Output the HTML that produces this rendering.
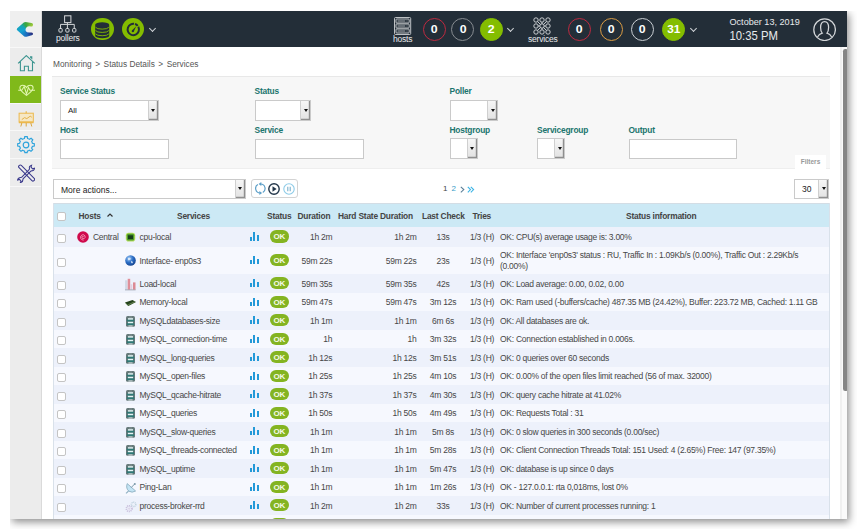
<!DOCTYPE html>
<html><head><meta charset="utf-8">
<style>
*{margin:0;padding:0;box-sizing:border-box}
html,body{width:857px;height:529px;overflow:hidden;background:#fff;font-family:"Liberation Sans",sans-serif;position:relative}
.abs{position:absolute}
#app{position:absolute;left:10px;top:11px;width:837px;height:508px;background:#fff;box-shadow:2px 3px 8px rgba(0,0,0,0.45);clip-path:inset(0 -30px -30px 0)}
#clip{position:absolute;left:0;top:0;width:857px;height:529px;clip-path:inset(11px 10px 10px 10px)}
#tb-l{position:absolute;left:53px;top:203px;width:1px;height:330px;background:#d9e1ea}
#tb-r{position:absolute;left:829px;top:203px;width:1px;height:330px;background:#d9e1ea}
#track{position:absolute;left:840px;top:47px;width:7px;height:480px;background:linear-gradient(90deg,#f0f0f0 0,#f0f0f0 2px,#fafafa 2px)}
#side{position:absolute;left:10px;top:11px;width:32px;height:508px;background:#ececec;border-right:1px solid #dadada}
#logo{position:absolute;left:0;top:0;width:31px;height:36px;background:#efefef}
.nav{position:absolute;left:0;width:31px;height:28px;border-top:1px solid #f8f8f8}
#hdr{position:absolute;left:42px;top:11px;width:805px;height:36px;background:#232e38}
.htxt{position:absolute;color:#e8eaec;font-size:8px;letter-spacing:-0.2px}
.circ{position:absolute;width:23.3px;height:23.3px;border-radius:50%;border:1.9px solid;color:#fff;font-weight:bold;font-size:11px;text-align:center;line-height:21px}
.circ span{display:inline-block;transform:scaleX(1.12)}
.chev{position:absolute;width:5px;height:5px;border-right:1.3px solid #cfd3d6;border-bottom:1.3px solid #cfd3d6;transform:rotate(45deg)}
#crumb{position:absolute;left:53px;top:59px;font-size:8.3px;color:#555;white-space:nowrap}
.gt{margin:0 3.6px 0 3.4px}
#filters{position:absolute;left:52px;top:76px;width:778px;height:92.5px;background:#f7f7f7;border-top:1px solid #e8e8e8;border-bottom:1px solid #eeeeee}
.lbl{position:absolute;font-size:8.4px;letter-spacing:-0.2px;font-weight:bold;color:#1b756e;white-space:nowrap;margin-top:0.6px}
.inp{position:absolute;background:#fff;border:1px solid #c9c9c9;height:21px}
.sel{position:absolute;background:#fff;border:1px solid #cacaca;height:21px}
.sel .btn{position:absolute;right:0;top:0;width:10px;height:100%;background:linear-gradient(#f6f6f6,#e2e2e2);border-left:1px solid #cfcfcf;box-shadow:inset -1.2px -1.2px 0 #8f8f8f}
.sel .btn:after{content:"";position:absolute;left:2.6px;top:50%;margin-top:-2px;border-left:2px solid transparent;border-right:2px solid transparent;border-top:3px solid #111}
.sel .val{position:absolute;left:7px;top:5px;font-size:8px;color:#222}
#ftab{position:absolute;left:795px;top:155px;width:31px;height:14px;background:#fff;font-size:6.5px;font-weight:bold;color:#999;text-align:center;line-height:13px}
.row{position:absolute;left:53px;width:777px;font-size:8.5px;letter-spacing:-0.27px;color:#474747;white-space:nowrap}
.row>div{position:absolute}
.cb{left:4px;top:50%;margin-top:-2.6px;width:9px;height:9px;border:1px solid #c4c4c4;border-radius:2px;background:#fff}
.debian{left:24px;top:50%;margin-top:-6px;width:12px;height:12px}
.debian svg,.sicon svg{display:block}
.hostname{left:40px;top:50%;margin-top:-4.5px;line-height:10px}
.sicon{left:72px;top:50%;margin-top:-5.5px}
.svc{left:86.5px;top:50%;margin-top:-4.5px;line-height:10px}
.graph{left:197px;top:50%;margin-top:-4.2px;width:9px;height:8.3px}
.graph i{position:absolute;width:2.1px;bottom:0;background:#2399d8}
.ok{left:217px;top:50%;margin-top:-6.2px;width:18.7px;height:12.3px;border-radius:6.2px;background:#84b421;color:#f4f9e8;font-weight:bold;font-size:8px;text-align:center;line-height:13.5px}
.dur{right:497.8px;top:50%;margin-top:-4.5px;line-height:10px}
.hard{right:413.5px;top:50%;margin-top:-4.5px;line-height:10px}
.last{left:370px;width:40px;text-align:center;top:50%;margin-top:-4.5px;line-height:10px}
.tries{left:417px;top:50%;margin-top:-4.5px;line-height:10px}
.info{left:447px;top:50%;margin-top:-4.5px;line-height:10px}
.info.two{margin-top:-10px;line-height:10.7px}
#thead{position:absolute;left:53px;top:203px;width:777px;height:23.5px;background:#cce9f5;border-top:1px solid #d3dde5}
#thead>div{position:absolute;top:7.5px;font-size:8.4px;letter-spacing:-0.2px;font-weight:bold;color:#444;white-space:nowrap;line-height:9px}
#scroll{position:absolute;left:843px;top:49px;width:4.5px;height:341.5px;background:#858585;border-radius:2.2px}
</style></head><body>
<div id="app"></div>
<div id="clip">
<div id="side">
  <div id="logo">
    <div class="abs" style="left:4px;top:7px;width:24px;height:22px;background:conic-gradient(from 0deg at 13px 11px, #45a93e 0deg, #a6cc3a 62deg, #5a5a70 92deg, #2a2876 122deg, #1d68bd 180deg, #14a2d2 250deg, #17a5b4 300deg, #33a64c 335deg, #45a93e 360deg);clip-path:path('M11.5 4 L17.6 5.0 Q19.5 5.4 19 7 L18.6 7.9 Q18.1 8.8 16.8 8.5 Q14 7.9 12.6 9.3 Q11 11 11.7 13 Q12.8 14.8 15.6 14.6 L17 14.4 Q18.6 14.3 19 15.4 Q19.2 16.8 17.8 17.2 L12.5 18.7 Q11 19 10 18.2 L3.2 12.2 Q2.2 11.2 3.2 10.3 L9.8 4.5 Q10.5 4 11.5 4 Z')"></div>
  </div>
  <div class="nav" style="top:36px;height:29px">
    <svg class="abs" style="left:7px;top:7px" width="19" height="17" viewBox="0 0 19 17"><path d="M1.1 8.3 L9.3 0.6 L17.8 8.3 M3.4 6.4 V15.7 H7.4 V11.2 H11.4 V15.7 H15.5 V6.4" fill="none" stroke="#3d9590" stroke-width="1.1"/><path d="M13 2.4 V1.2 H15.3 V4.5 Z" fill="#3d9590"/></svg>
  </div>
  <div class="nav" style="top:65px;height:26.5px;background:#80b91a;border-top:none">
    <svg class="abs" style="left:7px;top:8px" width="20" height="13" viewBox="0 0 20 13"><g fill="none" stroke="#e2f6b0" stroke-width="1.05"><path d="M9.5 11.4 C7 9.2 2.9 6.8 2.9 4 C2.9 2.3 4.1 1.2 5.7 1.2 C7.3 1.2 8.8 2.2 9.5 3.4 C10.2 2.2 11.7 1.2 13.3 1.2 C14.9 1.2 16.1 2.3 16.1 4 C16.1 6.8 12 9.2 9.5 11.4 Z"/><path d="M1.2 6.3 H4.8 L7.2 2.5 L9.5 10 L11.4 3.5 L13 6.3 H18"/></g></svg>
  </div>
  <div class="nav" style="top:91.5px">
    <svg class="abs" style="left:7px;top:6px" width="18" height="17" viewBox="0 0 18 17"><rect x="2.1" y="3.2" width="14.2" height="8.6" fill="#f6e7c4" stroke="#ecb84c" stroke-width="1"/><path d="M4.8 9.6 L7.6 7.6 L9.8 8.6 L13.2 6.2 L14.8 7.2" fill="none" stroke="#e2ac3a" stroke-width="0.9"/><path d="M9.2 1.2 V3.2 M1.8 12.6 H16.6" stroke="#ecb84c" stroke-width="1.2"/><path d="M4.8 13 L3.8 16.5 M9.2 13 V16.5 M13.8 13 L14.8 16.5" stroke="#d9a440" stroke-width="1"/></svg>
  </div>
  <div class="nav" style="top:119px">
    <svg class="abs" style="left:7px;top:5px" width="18" height="18" viewBox="0 0 18 18"><path d="M7.6 1 H10.4 L10.8 3.2 L12.6 4 L14.4 2.7 L16.3 4.6 L15 6.4 L15.8 8.2 L17 8.6 V11.4 L14.8 11.8 L14 13.6 L15.3 15.4 L13.4 17.3 L11.6 16 L9.8 16.8" fill="none" stroke="#2ea3dc" stroke-width="0"/><g fill="none" stroke="#2ea3dc" stroke-width="1.2"><circle cx="9" cy="9" r="2.8"/><path d="M7.8 1.2 H10.2 L10.6 3.2 Q11.6 3.5 12.4 4.1 L14.1 3 L15.8 4.7 L14.7 6.4 Q15.2 7.2 15.4 8.2 L17.3 8.6 V11 L15.4 11.4 Q15.1 12.4 14.6 13.2 L15.7 14.9 L14 16.6 L12.3 15.5 Q11.5 16 10.5 16.3 L10.1 18 H7.9 L7.5 16.3 Q6.5 16 5.7 15.5 L4 16.6 L2.3 14.9 L3.4 13.2 Q2.9 12.4 2.6 11.4 L0.7 11 V8.6 L2.6 8.2 Q2.8 7.2 3.3 6.4 L2.2 4.7 L3.9 3 L5.6 4.1 Q6.4 3.5 7.4 3.2 Z" transform="translate(0,-0.6) scale(1,0.96)"/></g></svg>
  </div>
  <div class="nav" style="top:147px">
    <svg class="abs" style="left:7px;top:5px" width="18" height="19" viewBox="0 0 18 19"><g fill="none" stroke="#3b3a8c" stroke-width="1.05"><rect x="-1.6" y="0" width="3.2" height="21" rx="1.4" transform="translate(2.2 1.6) rotate(-45)"/><path d="M4.3 13.6 L12.6 5.2 M5.8 15.1 L14.1 6.8"/><path d="M12.6 5.2 Q11.6 2 14.6 1.2 L14 3.2 L15.6 4.8 L17.6 4.2 Q17.2 7.2 14.1 6.8"/><path d="M4.3 13.6 Q1.4 13.2 0.6 16 L2.6 15.4 L4 17 L3.4 18.6 Q6.2 18.2 5.8 15.1"/></g></svg>
  </div>
  <div class="nav" style="top:175px;height:1px"></div>
</div>
<div id="hdr">
  <!-- pollers -->
  <svg class="abs" style="left:14px;top:3px" width="22" height="20" viewBox="0 0 22 20"><g fill="none" stroke="#d5d8db" stroke-width="1"><rect x="8.6" y="1.8" width="6.3" height="6.8"/><path d="M11.4 8.6 V10.4 M4.55 10.4 H18.25 M4.55 10.4 V14.5 M11.4 10.4 V14.5 M18.25 10.4 V14.5"/><rect x="2.9" y="14.5" width="3.3" height="3.6" rx="1"/><rect x="9.75" y="14.5" width="3.3" height="3.6" rx="1"/><rect x="16.6" y="14.5" width="3.3" height="3.6" rx="1"/></g></svg>
  <div class="htxt" style="left:14px;top:22px;font-size:8.5px">pollers</div>
  <div class="abs" style="left:49px;top:6.5px;width:22.5px;height:22.5px;border-radius:50%;background:#84bd00">
    <svg class="abs" style="left:0;top:0" width="22.5" height="22.5" viewBox="0 0 22.5 22.5"><path d="M4.2 6.7 A7 2.5 0 0 1 18.2 6.7 V17.8 A7 2.5 0 0 1 4.2 17.8 Z" fill="#232e38"/><g fill="none" stroke="#84bd00" stroke-width="0.9"><path d="M4.6 9.3 A6.8 2.4 0 0 0 17.8 9.3"/><path d="M4.6 12.6 A6.8 2.4 0 0 0 17.8 12.6"/><path d="M4.6 15.9 A6.8 2.4 0 0 0 17.8 15.9"/></g></svg>
  </div>
  <div class="abs" style="left:79.5px;top:6.5px;width:22.5px;height:22.5px;border-radius:50%;background:#84bd00">
    <svg class="abs" style="left:0;top:0" width="22.5" height="22.5" viewBox="0 0 22.5 22.5"><circle cx="11.3" cy="11.5" r="5.7" fill="none" stroke="#232e38" stroke-width="2" stroke-dasharray="3.2 0.9 3.2 0.9 40" transform="rotate(-115 11.3 11.5)"/><path d="M9.9 12.6 L14.2 8.2 L11.6 13.9 Z" fill="#232e38"/><circle cx="10.8" cy="13.2" r="1.1" fill="#232e38"/></svg>
  </div>
  <div class="chev" style="left:108px;top:14.5px"></div>

  <!-- hosts -->
  <svg class="abs" style="left:352px;top:5.5px" width="18" height="18" viewBox="0 0 18 18"><g fill="none" stroke="#cfd2d5" stroke-width="0.9"><rect x="0.5" y="0.5" width="16.2" height="17" rx="1"/><rect x="2" y="2" width="13.2" height="4" rx="0.8"/><rect x="2" y="7" width="13.2" height="4" rx="0.8"/><rect x="2" y="12" width="13.2" height="4" rx="0.8"/></g><path d="M3.6 4 H11.2 M3.6 9 H11.2 M3.6 14 H11.2" stroke="#b8bcc0" stroke-width="0.9"/><path d="M13 3.6 V4.4 M13 8.6 V9.4 M13 13.6 V14.4" stroke="#b8bcc0" stroke-width="0.8"/></svg>
  <div class="htxt" style="left:351px;top:22.5px;font-size:8.5px">hosts</div>
  <div class="circ" style="left:380.5px;top:7px;border-color:#bd2a40"><span>0</span></div>
  <div class="circ" style="left:409px;top:7px;border-color:#878c91"><span>0</span></div>
  <div class="circ" style="left:437.5px;top:7px;border-color:#84bd00;background:#84bd00"><span>2</span></div>
  <div class="chev" style="left:466px;top:14.5px"></div>

  <!-- services -->
  <svg class="abs" style="left:491px;top:5.5px" width="18" height="18" viewBox="0 0 18 18"><g fill="none" stroke="#d9dcdf" stroke-width="0.9"><circle cx="3" cy="3" r="2.2"/><circle cx="9" cy="3" r="2.2"/><circle cx="15" cy="3" r="2.2"/><circle cx="3" cy="9" r="2.2"/><circle cx="9" cy="9" r="2.2"/><circle cx="15" cy="9" r="2.2"/><circle cx="3" cy="15" r="2.2"/><circle cx="9" cy="15" r="2.2"/><circle cx="15" cy="15" r="2.2"/><path d="M4.6 4.6 L7.4 7.4 M13.4 4.6 L10.6 7.4 M4.6 13.4 L7.4 10.6 M13.4 13.4 L10.6 10.6 M5.2 9 H6.8 M11.2 9 H12.8 M9 5.2 V6.8 M9 11.2 V12.8"/></g></svg>
  <div class="htxt" style="left:486px;top:22.5px;font-size:8.5px">services</div>
  <div class="circ" style="left:525.5px;top:7px;border-color:#bd2a40"><span>0</span></div>
  <div class="circ" style="left:557.5px;top:7px;border-color:#d99c44"><span>0</span></div>
  <div class="circ" style="left:588.5px;top:7px;border-color:#c9ced3"><span>0</span></div>
  <div class="circ" style="left:619.5px;top:7px;border-color:#84bd00;background:#84bd00;font-size:10.5px;letter-spacing:-0.2px"><span>31</span></div>
  <div class="chev" style="left:649px;top:14.5px"></div>

  <div class="htxt" style="left:687.5px;top:6px;font-size:9.1px;letter-spacing:0px">October 13, 2019</div>
  <div class="htxt" style="left:687.5px;top:18px;font-size:11.3px;letter-spacing:0px;transform:scaleY(1.12);transform-origin:0 0">10:35 PM</div>
  <svg class="abs" style="left:770.5px;top:6.5px" width="23" height="23" viewBox="0 0 23 23"><g fill="none" stroke="#d3d6d9" stroke-width="1.25"><circle cx="11.6" cy="11.7" r="10.8"/><path d="M4.5 19 Q6 16 9.2 15.1 Q7.6 13.2 7.6 9.5 Q7.6 3.5 11.6 3.5 Q15.6 3.5 15.6 9.5 Q15.6 13.2 14 15.1 Q17.2 16 18.7 19"/></g></svg>
</div>

<div id="crumb">Monitoring<span class="gt">&gt;</span>Status Details<span class="gt">&gt;</span>Services</div>

<div id="filters"></div>
<div class="lbl" style="left:60px;top:85.5px">Service Status</div>
<div class="sel" style="left:60px;top:100px;width:98.5px"><div class="val">All</div><div class="btn"></div></div>
<div class="lbl" style="left:60px;top:124px">Host</div>
<div class="inp" style="left:60px;top:138.5px;width:108.5px;height:20px"></div>

<div class="lbl" style="left:254.5px;top:85.5px">Status</div>
<div class="sel" style="left:254.5px;top:100px;width:56.5px"><div class="btn"></div></div>
<div class="lbl" style="left:254.5px;top:124px">Service</div>
<div class="inp" style="left:254.5px;top:138.5px;width:109px;height:20px"></div>

<div class="lbl" style="left:449.5px;top:85.5px">Poller</div>
<div class="sel" style="left:449.5px;top:100px;width:48.5px"><div class="btn"></div></div>
<div class="lbl" style="left:449.5px;top:124px">Hostgroup</div>
<div class="sel" style="left:449.5px;top:138px;width:28px"><div class="btn"></div></div>

<div class="lbl" style="left:537px;top:124px">Servicegroup</div>
<div class="sel" style="left:537px;top:138px;width:28px"><div class="btn"></div></div>
<div class="lbl" style="left:628.5px;top:124px">Output</div>
<div class="inp" style="left:628.5px;top:138.5px;width:108px;height:20px"></div>
<div id="ftab">Filters</div>

<!-- toolbar -->
<div class="sel" style="left:53px;top:178.5px;width:192.5px;height:20px"><div class="val" style="top:5px;font-size:8.5px">More actions...</div><div class="btn"></div></div>
<div class="abs" style="left:251px;top:178.5px;width:46.7px;height:19.7px;border:1px solid #d3d3d3;border-radius:3px;background:#fff">
  <svg class="abs" style="left:3px;top:2.3px" width="11" height="13" viewBox="0 0 11 13"><g fill="none" stroke="#5c9fc8" stroke-width="1.2"><path d="M5.5 2 A4.5 4.5 0 0 1 7.8 10.4"/><path d="M5.2 11 A4.5 4.5 0 0 1 2.9 2.6"/></g><path d="M3.6 2 L6.3 0 L6.3 4 Z M7.1 11 L4.4 9 L4.4 13 Z" fill="#5c9fc8"/></svg>
  <svg class="abs" style="left:16.3px;top:3.2px" width="12" height="12" viewBox="0 0 12 12"><circle cx="6" cy="6" r="5.2" fill="none" stroke="#22364a" stroke-width="1.4"/><path d="M4.5 3.2 L8.6 6 L4.5 8.8Z" fill="#22364a"/></svg>
  <svg class="abs" style="left:30.8px;top:3.2px" width="12" height="12" viewBox="0 0 12 12"><circle cx="6" cy="6" r="5.2" fill="none" stroke="#8ccbe8" stroke-width="1.1"/><path d="M4.8 3.7 V8.3 M7.2 3.7 V8.3" stroke="#78b0cc" stroke-width="1.1"/></svg>
</div>
<div class="abs" style="left:443px;top:184px;font-size:8px;color:#444;white-space:nowrap">1</div>
<div class="abs" style="left:451.5px;top:184px;font-size:8px;color:#3a9cc8;white-space:nowrap">2</div>
<svg class="abs" style="left:459px;top:185px" width="18" height="9" viewBox="0 0 18 9"><path d="M1.8 1.8 L4.8 4.6 L1.8 7.4" fill="none" stroke="#5a7f98" stroke-width="1.1"/><path d="M8.8 1.8 L11.5 4.6 L8.8 7.4 M11.8 1.8 L14.6 4.6 L11.8 7.4" fill="none" stroke="#3bb4e5" stroke-width="1.1"/></svg>

<div class="sel" style="left:793.5px;top:178.5px;width:35.5px;height:20px"><div class="val" style="left:7.5px;top:4.5px;font-size:8.5px">30</div><div class="btn"></div></div>

<div id="thead">
  <div class="cb" style="left:4px;top:8px;margin-top:0;width:9px;height:9px;border:1px solid #c4c4c4;border-radius:2px;background:#fff"></div>
  <div style="left:25.5px">Hosts</div>
  <svg class="abs" style="left:53.5px;top:8.5px" width="6" height="4" viewBox="0 0 6 4"><path d="M0.5 3.5 L3 1 L5.5 3.5" fill="none" stroke="#333" stroke-width="1.2"/></svg>
  <div style="left:124px">Services</div>
  <div style="left:214px">Status</div>
  <div style="left:244.5px">Duration</div>
  <div style="left:285px">Hard State Duration</div>
  <div style="left:369px">Last Check</div>
  <div style="left:419.5px">Tries</div>
  <div style="left:573px">Status information</div>
</div>
<div class="row" style="top:226.50px;height:20px;background:#edf1fb">
<div class="cb"></div><div class="debian"><svg width="12" height="12" viewBox="0 0 12 12"><circle cx="6" cy="6" r="5.8" fill="#cf0a4c"/><path d="M6.4 6.1 Q6.4 5.1 5.6 5.3 Q4.6 5.7 5 6.9 Q5.6 8.2 7.2 7.6 Q8.6 6.8 8 5 Q7.2 3.2 5.2 3.8 Q3.2 4.6 3.6 7.2 Q4.2 9 6.6 9.2" fill="none" stroke="#f49ab8" stroke-width="0.9"/></svg></div><div class="hostname">Central</div><div class="sicon ic-cpu"><svg width="11" height="11" viewBox="0 0 11 11" style="margin-top:1px"><rect x="0.8" y="0.8" width="9.4" height="8.8" rx="2.8" fill="#b3dc5c"/><rect x="1.8" y="1.8" width="7.4" height="6.8" rx="1.5" fill="#4f9a2c"/><rect x="3" y="3.3" width="5" height="3.8" fill="#173d1a"/></svg></div><div class="svc">cpu-local</div>
<div class="graph"><i style="left:0;top:4.4px;height:3.9px"></i><i style="left:3.2px;top:0;height:8.3px"></i><i style="left:6.8px;top:2.5px;height:5.8px"></i></div>
<div class="ok">OK</div><div class="dur">1h 2m</div><div class="hard">1h 2m</div><div class="last">13s</div><div class="tries">1/3 (H)</div><div class="info">OK: CPU(s) average usage is: 3.00%</div>
</div>
<div class="row" style="top:246.50px;height:27.5px;background:#f6f8fe">
<div class="cb"></div><div class="sicon ic-globe"><svg width="11" height="11" viewBox="0 0 11 11"><defs><radialGradient id="gg" cx="0.35" cy="0.3" r="0.8"><stop offset="0" stop-color="#9cc8f5"/><stop offset="0.5" stop-color="#2a6cc4"/><stop offset="1" stop-color="#123e86"/></radialGradient></defs><circle cx="5.5" cy="5.5" r="5.3" fill="url(#gg)"/><path d="M3 3 Q5 2 6 4 Q4 6 3 5 Z M6 6 Q8 6 8 8 Q6 9 6 7Z" fill="#e8f2fb" opacity="0.8"/></svg></div><div class="svc">Interface- enp0s3</div>
<div class="graph"><i style="left:0;top:4.4px;height:3.9px"></i><i style="left:3.2px;top:0;height:8.3px"></i><i style="left:6.8px;top:2.5px;height:5.8px"></i></div>
<div class="ok">OK</div><div class="dur">59m 22s</div><div class="hard">59m 22s</div><div class="last">23s</div><div class="tries">1/3 (H)</div><div class="info two">OK: Interface 'enp0s3' status : RU, Traffic In : 1.09Kb/s (0.00%), Traffic Out : 2.29Kb/s<br>(0.00%)</div>
</div>
<div class="row" style="top:274.00px;height:18.5px;background:#edf1fb">
<div class="cb"></div><div class="sicon ic-load"><svg width="11" height="13" viewBox="0 0 11 13"><rect x="0.1" y="2.3" width="2.3" height="9.5" fill="#cfd9e6"/><rect x="2.7" y="0.8" width="2.5" height="11" fill="#df8f99"/><rect x="5.4" y="6.3" width="1.9" height="5.5" fill="#e2d0e0"/><rect x="8" y="4.4" width="2.5" height="7.4" fill="#dc8a94"/><rect x="0" y="11.5" width="10.6" height="0.8" fill="#9aa0ab"/></svg></div><div class="svc">Load-local</div>
<div class="graph"><i style="left:0;top:4.4px;height:3.9px"></i><i style="left:3.2px;top:0;height:8.3px"></i><i style="left:6.8px;top:2.5px;height:5.8px"></i></div>
<div class="ok">OK</div><div class="dur">59m 35s</div><div class="hard">59m 35s</div><div class="last">42s</div><div class="tries">1/3 (H)</div><div class="info">OK: Load average: 0.00, 0.02, 0.00</div>
</div>
<div class="row" style="top:292.50px;height:18.5px;background:#f6f8fe">
<div class="cb"></div><div class="sicon ic-mem"><svg width="12" height="7" viewBox="0 0 12 7" style="margin-top:3.6px"><path d="M0 2.6 L7.5 0.1 L11 1.9 L3.4 5.9 Z" fill="#24421d"/><path d="M3.2 4.8 L9.8 1.7" stroke="#8aa66a" stroke-width="0.7"/><path d="M0.3 2.6 L3.4 5.9" stroke="#4d7a36" stroke-width="0.6"/></svg></div><div class="svc">Memory-local</div>
<div class="graph"><i style="left:0;top:4.4px;height:3.9px"></i><i style="left:3.2px;top:0;height:8.3px"></i><i style="left:6.8px;top:2.5px;height:5.8px"></i></div>
<div class="ok">OK</div><div class="dur">59m 47s</div><div class="hard">59m 47s</div><div class="last">3m 12s</div><div class="tries">1/3 (H)</div><div class="info">OK: Ram used (-buffers/cache) 487.35 MB (24.42%), Buffer: 223.72 MB, Cached: 1.11 GB</div>
</div>
<div class="row" style="top:311.00px;height:18.5px;background:#edf1fb">
<div class="cb"></div><div class="sicon ic-db"><svg width="9" height="11" viewBox="0 0 9 11" style="margin-left:0.8px;margin-top:1px"><rect x="0" y="0" width="9" height="10.8" rx="1.6" fill="#66797a"/><rect x="0.9" y="3.6" width="7.2" height="1.9" fill="#2d7976"/><rect x="0.9" y="7.2" width="7.2" height="1.9" fill="#2d7976"/><rect x="2" y="2.2" width="5" height="1.4" fill="#e2f6f6"/><rect x="2" y="5.8" width="5" height="1.4" fill="#e2f6f6"/><rect x="2.4" y="9.4" width="4.2" height="1.1" fill="#cfdcdc"/><rect x="3" y="0.6" width="3" height="0.9" fill="#8a9a9a"/></svg></div><div class="svc">MySQLdatabases-size</div>
<div class="graph"><i style="left:0;top:4.4px;height:3.9px"></i><i style="left:3.2px;top:0;height:8.3px"></i><i style="left:6.8px;top:2.5px;height:5.8px"></i></div>
<div class="ok">OK</div><div class="dur">1h 1m</div><div class="hard">1h 1m</div><div class="last">6m 6s</div><div class="tries">1/3 (H)</div><div class="info">OK: All databases are ok.</div>
</div>
<div class="row" style="top:329.50px;height:18.5px;background:#f6f8fe">
<div class="cb"></div><div class="sicon ic-db"><svg width="9" height="11" viewBox="0 0 9 11" style="margin-left:0.8px;margin-top:1px"><rect x="0" y="0" width="9" height="10.8" rx="1.6" fill="#66797a"/><rect x="0.9" y="3.6" width="7.2" height="1.9" fill="#2d7976"/><rect x="0.9" y="7.2" width="7.2" height="1.9" fill="#2d7976"/><rect x="2" y="2.2" width="5" height="1.4" fill="#e2f6f6"/><rect x="2" y="5.8" width="5" height="1.4" fill="#e2f6f6"/><rect x="2.4" y="9.4" width="4.2" height="1.1" fill="#cfdcdc"/><rect x="3" y="0.6" width="3" height="0.9" fill="#8a9a9a"/></svg></div><div class="svc">MySQL_connection-time</div>
<div class="graph"><i style="left:0;top:4.4px;height:3.9px"></i><i style="left:3.2px;top:0;height:8.3px"></i><i style="left:6.8px;top:2.5px;height:5.8px"></i></div>
<div class="ok">OK</div><div class="dur">1h</div><div class="hard">1h</div><div class="last">3m 32s</div><div class="tries">1/3 (H)</div><div class="info">OK: Connection established in 0.006s.</div>
</div>
<div class="row" style="top:348.00px;height:18.5px;background:#edf1fb">
<div class="cb"></div><div class="sicon ic-db"><svg width="9" height="11" viewBox="0 0 9 11" style="margin-left:0.8px;margin-top:1px"><rect x="0" y="0" width="9" height="10.8" rx="1.6" fill="#66797a"/><rect x="0.9" y="3.6" width="7.2" height="1.9" fill="#2d7976"/><rect x="0.9" y="7.2" width="7.2" height="1.9" fill="#2d7976"/><rect x="2" y="2.2" width="5" height="1.4" fill="#e2f6f6"/><rect x="2" y="5.8" width="5" height="1.4" fill="#e2f6f6"/><rect x="2.4" y="9.4" width="4.2" height="1.1" fill="#cfdcdc"/><rect x="3" y="0.6" width="3" height="0.9" fill="#8a9a9a"/></svg></div><div class="svc">MySQL_long-queries</div>
<div class="graph"><i style="left:0;top:4.4px;height:3.9px"></i><i style="left:3.2px;top:0;height:8.3px"></i><i style="left:6.8px;top:2.5px;height:5.8px"></i></div>
<div class="ok">OK</div><div class="dur">1h 12s</div><div class="hard">1h 12s</div><div class="last">3m 51s</div><div class="tries">1/3 (H)</div><div class="info">OK: 0 queries over 60 seconds</div>
</div>
<div class="row" style="top:366.50px;height:18.5px;background:#f6f8fe">
<div class="cb"></div><div class="sicon ic-db"><svg width="9" height="11" viewBox="0 0 9 11" style="margin-left:0.8px;margin-top:1px"><rect x="0" y="0" width="9" height="10.8" rx="1.6" fill="#66797a"/><rect x="0.9" y="3.6" width="7.2" height="1.9" fill="#2d7976"/><rect x="0.9" y="7.2" width="7.2" height="1.9" fill="#2d7976"/><rect x="2" y="2.2" width="5" height="1.4" fill="#e2f6f6"/><rect x="2" y="5.8" width="5" height="1.4" fill="#e2f6f6"/><rect x="2.4" y="9.4" width="4.2" height="1.1" fill="#cfdcdc"/><rect x="3" y="0.6" width="3" height="0.9" fill="#8a9a9a"/></svg></div><div class="svc">MySQL_open-files</div>
<div class="graph"><i style="left:0;top:4.4px;height:3.9px"></i><i style="left:3.2px;top:0;height:8.3px"></i><i style="left:6.8px;top:2.5px;height:5.8px"></i></div>
<div class="ok">OK</div><div class="dur">1h 25s</div><div class="hard">1h 25s</div><div class="last">4m 10s</div><div class="tries">1/3 (H)</div><div class="info">OK: 0.00% of the open files limit reached (56 of max. 32000)</div>
</div>
<div class="row" style="top:385.00px;height:18.5px;background:#edf1fb">
<div class="cb"></div><div class="sicon ic-db"><svg width="9" height="11" viewBox="0 0 9 11" style="margin-left:0.8px;margin-top:1px"><rect x="0" y="0" width="9" height="10.8" rx="1.6" fill="#66797a"/><rect x="0.9" y="3.6" width="7.2" height="1.9" fill="#2d7976"/><rect x="0.9" y="7.2" width="7.2" height="1.9" fill="#2d7976"/><rect x="2" y="2.2" width="5" height="1.4" fill="#e2f6f6"/><rect x="2" y="5.8" width="5" height="1.4" fill="#e2f6f6"/><rect x="2.4" y="9.4" width="4.2" height="1.1" fill="#cfdcdc"/><rect x="3" y="0.6" width="3" height="0.9" fill="#8a9a9a"/></svg></div><div class="svc">MySQL_qcache-hitrate</div>
<div class="graph"><i style="left:0;top:4.4px;height:3.9px"></i><i style="left:3.2px;top:0;height:8.3px"></i><i style="left:6.8px;top:2.5px;height:5.8px"></i></div>
<div class="ok">OK</div><div class="dur">1h 37s</div><div class="hard">1h 37s</div><div class="last">4m 30s</div><div class="tries">1/3 (H)</div><div class="info">OK: query cache hitrate at 41.02%</div>
</div>
<div class="row" style="top:403.50px;height:18.5px;background:#f6f8fe">
<div class="cb"></div><div class="sicon ic-db"><svg width="9" height="11" viewBox="0 0 9 11" style="margin-left:0.8px;margin-top:1px"><rect x="0" y="0" width="9" height="10.8" rx="1.6" fill="#66797a"/><rect x="0.9" y="3.6" width="7.2" height="1.9" fill="#2d7976"/><rect x="0.9" y="7.2" width="7.2" height="1.9" fill="#2d7976"/><rect x="2" y="2.2" width="5" height="1.4" fill="#e2f6f6"/><rect x="2" y="5.8" width="5" height="1.4" fill="#e2f6f6"/><rect x="2.4" y="9.4" width="4.2" height="1.1" fill="#cfdcdc"/><rect x="3" y="0.6" width="3" height="0.9" fill="#8a9a9a"/></svg></div><div class="svc">MySQL_queries</div>
<div class="graph"><i style="left:0;top:4.4px;height:3.9px"></i><i style="left:3.2px;top:0;height:8.3px"></i><i style="left:6.8px;top:2.5px;height:5.8px"></i></div>
<div class="ok">OK</div><div class="dur">1h 50s</div><div class="hard">1h 50s</div><div class="last">4m 49s</div><div class="tries">1/3 (H)</div><div class="info">OK: Requests Total : 31</div>
</div>
<div class="row" style="top:422.00px;height:18.5px;background:#edf1fb">
<div class="cb"></div><div class="sicon ic-db"><svg width="9" height="11" viewBox="0 0 9 11" style="margin-left:0.8px;margin-top:1px"><rect x="0" y="0" width="9" height="10.8" rx="1.6" fill="#66797a"/><rect x="0.9" y="3.6" width="7.2" height="1.9" fill="#2d7976"/><rect x="0.9" y="7.2" width="7.2" height="1.9" fill="#2d7976"/><rect x="2" y="2.2" width="5" height="1.4" fill="#e2f6f6"/><rect x="2" y="5.8" width="5" height="1.4" fill="#e2f6f6"/><rect x="2.4" y="9.4" width="4.2" height="1.1" fill="#cfdcdc"/><rect x="3" y="0.6" width="3" height="0.9" fill="#8a9a9a"/></svg></div><div class="svc">MySQL_slow-queries</div>
<div class="graph"><i style="left:0;top:4.4px;height:3.9px"></i><i style="left:3.2px;top:0;height:8.3px"></i><i style="left:6.8px;top:2.5px;height:5.8px"></i></div>
<div class="ok">OK</div><div class="dur">1h 1m</div><div class="hard">1h 1m</div><div class="last">5m 8s</div><div class="tries">1/3 (H)</div><div class="info">OK: 0 slow queries in 300 seconds (0.00/sec)</div>
</div>
<div class="row" style="top:440.50px;height:18.5px;background:#f6f8fe">
<div class="cb"></div><div class="sicon ic-db"><svg width="9" height="11" viewBox="0 0 9 11" style="margin-left:0.8px;margin-top:1px"><rect x="0" y="0" width="9" height="10.8" rx="1.6" fill="#66797a"/><rect x="0.9" y="3.6" width="7.2" height="1.9" fill="#2d7976"/><rect x="0.9" y="7.2" width="7.2" height="1.9" fill="#2d7976"/><rect x="2" y="2.2" width="5" height="1.4" fill="#e2f6f6"/><rect x="2" y="5.8" width="5" height="1.4" fill="#e2f6f6"/><rect x="2.4" y="9.4" width="4.2" height="1.1" fill="#cfdcdc"/><rect x="3" y="0.6" width="3" height="0.9" fill="#8a9a9a"/></svg></div><div class="svc">MySQL_threads-connected</div>
<div class="graph"><i style="left:0;top:4.4px;height:3.9px"></i><i style="left:3.2px;top:0;height:8.3px"></i><i style="left:6.8px;top:2.5px;height:5.8px"></i></div>
<div class="ok">OK</div><div class="dur">1h 1m</div><div class="hard">1h 1m</div><div class="last">5m 28s</div><div class="tries">1/3 (H)</div><div class="info">OK: Client Connection Threads Total: 151 Used: 4 (2.65%) Free: 147 (97.35%)</div>
</div>
<div class="row" style="top:459.00px;height:18.5px;background:#edf1fb">
<div class="cb"></div><div class="sicon ic-db"><svg width="9" height="11" viewBox="0 0 9 11" style="margin-left:0.8px;margin-top:1px"><rect x="0" y="0" width="9" height="10.8" rx="1.6" fill="#66797a"/><rect x="0.9" y="3.6" width="7.2" height="1.9" fill="#2d7976"/><rect x="0.9" y="7.2" width="7.2" height="1.9" fill="#2d7976"/><rect x="2" y="2.2" width="5" height="1.4" fill="#e2f6f6"/><rect x="2" y="5.8" width="5" height="1.4" fill="#e2f6f6"/><rect x="2.4" y="9.4" width="4.2" height="1.1" fill="#cfdcdc"/><rect x="3" y="0.6" width="3" height="0.9" fill="#8a9a9a"/></svg></div><div class="svc">MySQL_uptime</div>
<div class="graph"><i style="left:0;top:4.4px;height:3.9px"></i><i style="left:3.2px;top:0;height:8.3px"></i><i style="left:6.8px;top:2.5px;height:5.8px"></i></div>
<div class="ok">OK</div><div class="dur">1h 1m</div><div class="hard">1h 1m</div><div class="last">5m 47s</div><div class="tries">1/3 (H)</div><div class="info">OK: database is up since 0 days</div>
</div>
<div class="row" style="top:477.50px;height:18.5px;background:#f6f8fe">
<div class="cb"></div><div class="sicon ic-ping"><svg width="12" height="12" viewBox="0 0 12 12" style="margin-top:0.5px"><path d="M2.2 1.6 Q0.6 6.6 4 9.2 Q7 11.2 10.6 9 Z" fill="#c3e4f4" stroke="#8fb0c2" stroke-width="0.9"/><path d="M6.2 5.6 L9.4 2.2" stroke="#7a98a8" stroke-width="1"/><circle cx="9.8" cy="1.9" r="1" fill="#7a98a8"/><path d="M3.6 9 L1 11.4" stroke="#8fb0c2" stroke-width="1.1"/></svg></div><div class="svc">Ping-Lan</div>
<div class="graph"><i style="left:0;top:4.4px;height:3.9px"></i><i style="left:3.2px;top:0;height:8.3px"></i><i style="left:6.8px;top:2.5px;height:5.8px"></i></div>
<div class="ok">OK</div><div class="dur">1h 1m</div><div class="hard">1h 1m</div><div class="last">1m 26s</div><div class="tries">1/3 (H)</div><div class="info">OK - 127.0.0.1: rta 0,018ms, lost 0%</div>
</div>
<div class="row" style="top:496.00px;height:18.5px;background:#edf1fb">
<div class="cb"></div><div class="sicon ic-proc"><svg width="12" height="12" viewBox="0 0 12 12" style="margin-top:1px"><circle cx="4.2" cy="7.6" r="2.8" fill="none" stroke="#cbc2de" stroke-width="1.8" stroke-dasharray="1.1 0.7"/><circle cx="4.2" cy="7.6" r="1.2" fill="#ddd6ea"/><circle cx="8.6" cy="3.4" r="2.2" fill="none" stroke="#c2d3df" stroke-width="1.5" stroke-dasharray="0.9 0.6"/></svg></div><div class="svc">process-broker-rrd</div>
<div class="graph"><i style="left:0;top:4.4px;height:3.9px"></i><i style="left:3.2px;top:0;height:8.3px"></i><i style="left:6.8px;top:2.5px;height:5.8px"></i></div>
<div class="ok">OK</div><div class="dur">1h 2m</div><div class="hard">1h 2m</div><div class="last">33s</div><div class="tries">1/3 (H)</div><div class="info">OK: Number of current processes running: 1</div>
</div>
<div class="row" style="top:514.50px;height:18.5px;background:#f6f8fe">
<div class="cb"></div><div class="sicon ic-proc"><svg width="12" height="12" viewBox="0 0 12 12" style="margin-top:1px"><circle cx="4.2" cy="7.6" r="2.8" fill="none" stroke="#cbc2de" stroke-width="1.8" stroke-dasharray="1.1 0.7"/><circle cx="4.2" cy="7.6" r="1.2" fill="#ddd6ea"/><circle cx="8.6" cy="3.4" r="2.2" fill="none" stroke="#c2d3df" stroke-width="1.5" stroke-dasharray="0.9 0.6"/></svg></div><div class="svc">process-centengine</div>
<div class="graph"><i style="left:0;top:4.4px;height:3.9px"></i><i style="left:3.2px;top:0;height:8.3px"></i><i style="left:6.8px;top:2.5px;height:5.8px"></i></div>
<div class="ok">OK</div><div class="dur">1h 2m</div><div class="hard">1h 2m</div><div class="last">33s</div><div class="tries">1/3 (H)</div><div class="info">OK: Number of current processes running: 1</div>
</div>
<div id="tb-l"></div><div id="tb-r"></div>
<div id="track"></div><div id="scroll"></div>
</div>
</body></html>
